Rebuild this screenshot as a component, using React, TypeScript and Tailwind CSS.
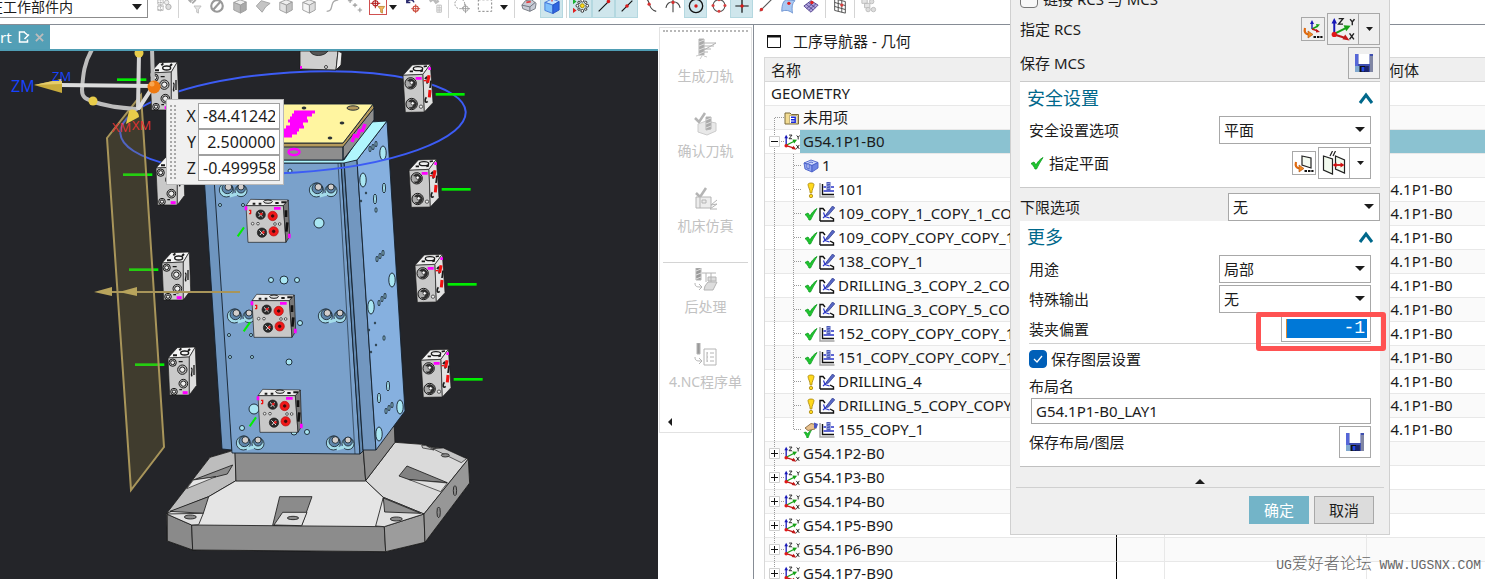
import { useState } from "react";
import type { ReactNode } from "react";
import clsx from "clsx";

type Status = "ok" | "warn" | "hand";
type OpKind = "mill" | "drill";

interface TreeRow {
    label: string;
    level: 0 | 1 | 2;
    icon?: "folder" | "mcs" | "part";
    status?: Status;
    op?: OpKind;
    open?: boolean;
    closed?: boolean;
    selected?: boolean;
    last?: boolean;
    geometry?: string;
}

const PARENT = "G54.1P1-B0";

const rows: TreeRow[] = [
    { label: "GEOMETRY", level: 0 },
    { label: "未用项", level: 1, icon: "folder" },
    { label: PARENT, level: 1, icon: "mcs", open: true, selected: true },
    { label: "1", level: 2, icon: "part" },
    { label: "101", level: 2, status: "warn", op: "mill", geometry: PARENT },
    { label: "109_COPY_1_COPY_1_COPY", level: 2, status: "ok", op: "drill", geometry: PARENT },
    { label: "109_COPY_COPY_COPY_1", level: 2, status: "ok", op: "drill", geometry: PARENT },
    { label: "138_COPY_1", level: 2, status: "ok", op: "drill", geometry: PARENT },
    { label: "DRILLING_3_COPY_2_COPY", level: 2, status: "ok", op: "drill", geometry: PARENT },
    { label: "DRILLING_3_COPY_5_COPY", level: 2, status: "ok", op: "drill", geometry: PARENT },
    { label: "152_COPY_COPY_COPY_1", level: 2, status: "ok", op: "mill", geometry: PARENT },
    { label: "151_COPY_COPY_COPY_1", level: 2, status: "ok", op: "mill", geometry: PARENT },
    { label: "DRILLING_4", level: 2, status: "warn", op: "drill", geometry: PARENT },
    { label: "DRILLING_5_COPY_COPY", level: 2, status: "warn", op: "drill", geometry: PARENT },
    { label: "155_COPY_1", level: 2, status: "hand", op: "mill", geometry: PARENT, last: true },
    { label: "G54.1P2-B0", level: 1, icon: "mcs", closed: true },
    { label: "G54.1P3-B0", level: 1, icon: "mcs", closed: true },
    { label: "G54.1P4-B0", level: 1, icon: "mcs", closed: true },
    { label: "G54.1P5-B90", level: 1, icon: "mcs", closed: true },
    { label: "G54.1P6-B90", level: 1, icon: "mcs", closed: true },
    { label: "G54.1P7-B90", level: 1, icon: "mcs", closed: true },
];

/* ---------- small icons ---------- */

function Triangle({ up = false, className = "h-[6px] w-[10px]" }: { up?: boolean; className?: string }) {
    return (
        <svg viewBox="0 0 10 6" preserveAspectRatio="none" className={clsx("shrink-0", className)} fill="#1c1c1c">
            <path d={up ? "M0 6 5 0l5 6z" : "M0 0h10L5 6z"} />
        </svg>
    );
}

function AxesIcon({ className = "size-4" }: { className?: string }) {
    return (
        <svg viewBox="0 0 22 22" className={clsx("shrink-0", className)}>
            <path d="M3 16V4" stroke="#1717b8" strokeWidth="1.8" />
            <path d="M0.5 6 3 1l2.500 5z" fill="#1717b8" />
            <path d="M3 15.500 14 10" stroke="#16a016" strokeWidth="1.800" />
            <path d="M11.500 7.500 18 8l-4 5z" fill="#16a016" />
            <path d="m3 16 11 3.500" stroke="#c01818" strokeWidth="1.800" />
            <path d="M13 16 17 21.500l-6.500-1z" fill="#c01818" />
            <circle cx="3" cy="16" r="2.400" fill="#e01818" />
            <path d="M7 1.500h4L7 6.500h4M17.500 2l2 2.500 2-2.500M19.500 4.500V7.500M17 15l4 5.500M21 15l-4 5.500" stroke="#222" strokeWidth="1.300" fill="none" />
        </svg>
    );
}

function CheckIcon() {
    return (
        <svg viewBox="0 0 16 16" className="size-4 shrink-0">
            <path d="M2 8.500 5 7l2 3C8.500 7 10.500 4.500 14 2.500 11.500 6.500 9.500 10 7.500 14H6C5 11.500 4 10 2 8.500z" fill="#1fc62f" stroke="#0d9a1e" strokeWidth=".8" />
        </svg>
    );
}

function WarnIcon() {
    return (
        <svg viewBox="0 0 16 16" className="size-4 shrink-0">
            <path d="M5 2.500C5 .5 11 .5 11 2.500 11 5 9 7 8.800 11H7.200C7 7 5 5 5 2.500z" fill="#ffd91c" stroke="#a8850a" strokeWidth=".8" />
            <circle cx="8" cy="14" r="1.700" fill="#ffd91c" stroke="#a8850a" strokeWidth=".8" />
        </svg>
    );
}

function HandIcon() {
    return (
        <svg viewBox="0 0 16 16" className="size-4 shrink-0">
            <path d="M1 10.500 3 10l1.500 2c1-2 2-3 4-4-1.500 3-2.500 5-3.500 8H4c-.5-2-1.500-4-3-5.500z" fill="#1fc62f" stroke="#0d9a1e" strokeWidth=".7" />
            <path d="M2 6 8 1.500l5 1L12 7 5 8.500z" fill="#e8c08c" stroke="#7a5a30" strokeWidth=".8" />
            <path d="m11 .5 4 1.500-1.500 4.500L11 6z" fill="#4a55c0" />
        </svg>
    );
}

function MillIcon() {
    return (
        <svg viewBox="0 0 16 16" className="size-4 shrink-0">
            <path d="M1 1v14H15.500" stroke="#a4a4a4" strokeWidth="1.500" fill="none" />
            <path d="M3.500 2v10.500H15" stroke="#111" strokeWidth="1.400" fill="none" />
            <path d="M4.500 5h2.500M12 5h3M4.500 9h10.500" stroke="#2a35c8" strokeWidth="1.300" />
            <path d="M7.500 0h4v8.500h-4z" fill="#4c5bb8" />
            <path d="m7.500 2 4-1M7.500 4.500l4-1M7.500 7l4-1" stroke="#a9b4ee" strokeWidth=".7" />
        </svg>
    );
}

function DrillIcon() {
    return (
        <svg viewBox="0 0 16 16" className="size-4 shrink-0">
            <path d="M1 15V2.500h3l2 2.500M1 15h13.500v-2L11 11" stroke="#111" strokeWidth="1.400" fill="none" />
            <path d="M4.500 6.500 6 10.500l4.500 1.500M4 12l4.500-4" stroke="#2a35c8" strokeWidth="1.200" fill="none" />
            <path d="M7 8.500 13.500 0l2.300 1.800L9 9.500z" fill="#5868c4" stroke="#28348c" strokeWidth=".7" />
        </svg>
    );
}

function FolderIcon() {
    return (
        <svg viewBox="0 0 16 16" className="size-4 shrink-0">
            <path d="M1 3h5l1.500 1.500H14.500V14H1z" fill="#f3dc93" stroke="#7a6a3a" strokeWidth="1" />
            <path d="M5.500 5.500h7.500v8H5.500z" fill="#fff" stroke="#9a8a50" strokeWidth=".6" />
            <path d="M7 7.200h4.200v5H7M7 9.700h4" stroke="#1a2ad8" strokeWidth="1.400" fill="none" />
        </svg>
    );
}

function PartIcon() {
    return (
        <svg viewBox="0 0 16 16" className="size-4 shrink-0" stroke="#4a60c8" strokeWidth=".9" strokeLinejoin="round">
            <path d="m1 5 7-3 7 2.500-6 3z" fill="#cdd8fc" />
            <path d="m1 5 8 2.500V14L2 11z" fill="#8fa4f0" />
            <path d="m9 7.500 6-3V10l-6 4z" fill="#6f86e2" />
            <path d="m4 6 4-2 2 .8M4 6v4l2 1V7" fill="#dfe6ff" />
        </svg>
    );
}

function FloppyIcon() {
    return (
        <svg viewBox="0 0 20 20" className="size-5">
            <path d="M1 1h18v18H1z" fill="#3f4fb0" />
            <path d="M1 13h5v6H1z" fill="#7fa8d0" />
            <path d="M1 1h3v12H1z" fill="#5566d8" />
            <path d="M16 3h3v16h-3z" fill="#8086a4" />
            <path d="M4.500 1h11v10h-11z" fill="#fff" />
            <path d="M5.500 13h9v6h-9z" fill="#111" />
            <path d="M7.500 14h3v4.500h-3z" fill="#2448e8" />
            <path d="M11 13h3v6h-3z" fill="#1a2470" />
        </svg>
    );
}

function PickIcon({ plane = false }: { plane?: boolean }) {
    return (
        <svg viewBox="0 0 20 20" className="size-5" fill="none">
            {plane ? (
                <path d="m8 3 9 2v10l-9-3z" stroke="#222" strokeWidth="1.200" fill="#f4faf0" />
            ) : (
                <>
                    <path d="M9 10V4" stroke="#1717b8" strokeWidth="1.400" />
                    <path d="m7 5 2-4 2 4z" fill="#1717b8" />
                    <path d="m9 10 6-3" stroke="#16a016" strokeWidth="1.400" />
                    <path d="m13 5 4 .5-3 3z" fill="#16a016" />
                    <path d="m9 10 6 2" stroke="#c01818" strokeWidth="1.400" />
                    <path d="m13 10 4 3-4 .5z" fill="#c01818" />
                </>
            )}
            <path d="M2 9c-1 4 0 6 4 6.500" stroke="#e06a10" strokeWidth="2.200" />
            <path d="m5 12 5 3.500-5 3.500z" fill="#f08a20" stroke="#b04a08" strokeWidth=".6" />
            <path d="M10.500 17h2.500v2h-2.500zM14 17h2.500v2H14zM17.300 17h2.200v2h-2.200z" fill="#111" />
        </svg>
    );
}

function PlanesIcon() {
    return (
        <svg viewBox="0 0 24 24" className="size-6" fill="none">
            <path d="m1.500 5 9 3v15l-9-4zM13.500 5l9 4v13l-9-4z" fill="#f2faee" stroke="#222" strokeWidth="1.200" />
            <path d="m8 5 2.500-5M11 5l2.500-5" stroke="#222" strokeWidth="1.200" />
            <path d="M12 14h9" stroke="#d01010" strokeWidth="1.800" />
            <path d="m14.500 11.500-4 2.500 4 2.500zM18.500 11.500l4 2.500-4 2.500z" fill="#d01010" />
        </svg>
    );
}

/* ---------- top tool bar ---------- */

function Tool({ name, active, boxed, children }: { name: string; active?: boolean; boxed?: boolean; children: ReactNode }) {
    return (
        <button
            type="button"
            aria-label={name}
            className={clsx("flex h-[24px] w-[23px] shrink-0 items-center justify-center", active && "border border-[#b4d8e0] bg-[#cfe6ec]")}
        >
            <svg viewBox="0 0 18 18" className={clsx("size-4 shrink-0", boxed && "outline outline-[#d05050]")} fill="none">
                {children}
            </svg>
        </button>
    );
}

function Separator({ className }: { className: string }) {
    return (
        <span className={clsx("flex h-[26px] shrink-0 justify-center", className)}>
            <span className="w-px bg-[#d4d4d4]" />
        </span>
    );
}

function Cube({ face = "#e2e2e2", side = "#c2c2c2" }: { face?: string; side?: string }) {
    return (
        <g stroke="#9c9c9c" strokeLinejoin="round">
            <path d="m2 5 7-3 7 2.500-6.500 3.500z" fill="#eee" />
            <path d="m2 5 7.500 3V17L2 13.500z" fill={face} />
            <path d="M9.500 8 16 4.500v9L9.500 17z" fill={side} />
        </g>
    );
}

function ToolBar() {
    return (
        <header className="flex h-[25px] shrink-0 items-end overflow-hidden border-b border-[#868c95] bg-white pb-[6px]">
            <div className="relative mr-1 -ml-3 shrink-0">
                <select aria-label="选择范围" className="h-[26px] w-[160px] appearance-none border border-[#8c8c8c] bg-white pt-1 text-[14px] text-[#1c1c1c]">
                    <option>在工作部件内</option>
                </select>
                <Triangle className="pointer-events-none absolute right-[6px] bottom-[8px] h-[6px] w-[10px]" />
            </div>
            <Tool name="装配">
                <path d="M5 1v14M2 5h9M2 9h7M2 13h6" stroke="#b0b0b0" strokeDasharray="2 1" />
                <path d="M2 2h6v5H2zM2 9h6v5H2z" stroke="#b8b8b8" />
                <circle cx="12" cy="5" r="2.500" stroke="#bbb" fill="#eee" />
                <circle cx="14" cy="10" r="3" stroke="#aaa" fill="#ddd" />
            </Tool>
            <Separator className="w-[7px]" />
            <Tool name="重置过滤器">
                <path d="M3 2h5M3 2l3-2M3 2l3 3M7 6l4-4" stroke="#aaa" strokeWidth="2" />
                <path d="M9 9h8l-3 4v4l-2-1v-3z" fill="#e8e8e8" stroke="#bbb" />
            </Tool>
            <Tool name="不选择">
                <circle cx="9" cy="9" r="6.500" stroke="#999" strokeWidth="2.400" />
                <path d="m5 13 8-9" stroke="#999" strokeWidth="2.400" />
            </Tool>
            <Tool name="体"><Cube face="#bdbdbd" side="#a9a9a9" /></Tool>
            <Tool name="面"><path d="M1.500 9 7 3l10 3-5 4-4 6z" fill="#c4c4c4" stroke="#a0a0a0" /></Tool>
            <Tool name="实体面"><Cube /></Tool>
            <Tool name="实体边"><Cube face="#f6f6f6" side="#ddd" /></Tool>
            <Tool name="曲线"><path d="M3 15c5 0 5-3 6-7s2-5 7-6" stroke="#aaa" strokeWidth="1.500" /></Tool>
            <Tool name="点"><path d="M1 3h5M3.500 .5v5M6.500 8h5M9 5.500v5M12 13.500h5M14.500 11v5" stroke="#9a9a9a" strokeWidth="1.200" /></Tool>
            <Tool name="捕捉过滤" boxed>
                <circle cx="6" cy="6" r="3" stroke="#b01818" strokeWidth="1.200" />
                <path d="M6 .5v11M.5 6h11" stroke="#b01818" strokeWidth="1.100" />
                <path d="M9 9.500h7.500l-2.500 3.500V17l-2-1v-3z" fill="#f5b860" stroke="#b07820" strokeWidth=".8" />
            </Tool>
            <span className="flex h-[26px] w-3 shrink-0 items-center"><Triangle className="mt-1 h-[5px] w-2" /></span>
            <Tool name="移动点">
                <path d="M2 5c2-4 7-4 8 0M2 1v4h4" stroke="#28286c" strokeWidth="1.600" />
                <circle cx="12" cy="12" r="3" stroke="#c84030" strokeWidth="1.200" />
                <path d="M12 7v10M7 12h10" stroke="#c84030" />
            </Tool>
            <Tool name="列表">
                <path d="M2 4l4-3 3 4 3-2" stroke="#bbb" strokeWidth="3" />
                <path d="M10 8h5v8h-5zM10 11h5M10 13.500h5M12.500 8v8" stroke="#bbb" />
            </Tool>
            <Separator className="w-[3px]" />
            <Tool name="区域选择">
                <circle cx="6.500" cy="6.500" r="5.500" stroke="#888" strokeDasharray="2 1.500" />
                <circle cx="13" cy="12" r="3" stroke="#999" />
                <path d="M13 7v10M8 12h10" stroke="#999" />
            </Tool>
            <Tool name="矩形选择"><path d="M1.500 2h15v13h-15z" stroke="#777" strokeDasharray="2.500 2" /></Tool>
            <span className="flex h-[26px] w-[15px] shrink-0 items-center justify-center"><Triangle className="mt-1 h-[5px] w-2" /></span>
            <Separator className="w-[6px]" />
            <Tool name="着色">
                <path d="m1 8 4-5 7-1 5 4-1 6-6 3-8-3z" fill="#c8ccd6" stroke="#70747c" />
                <path d="m1 8 9 2 6-5M10 10v5" stroke="#666b76" />
                <path d="m6 5 5-1" stroke="#e04040" strokeWidth="2" />
            </Tool>
            <Tool name="线框着色" active>
                <path d="m1 5 8-4 8 3-7 4z" fill="#c8e6ff" stroke="#4074d8" />
                <path d="m1 5 9 3v9.500L1 14z" fill="#7fc0fb" stroke="#4074d8" />
                <path d="m10 8 7-4v9.500l-7 4z" fill="#2f66e0" stroke="#2450c0" />
                <path d="M9 0v4" stroke="#e04040" strokeWidth="1.500" />
            </Tool>
            <Separator className="w-[6px]" />
            <Tool name="启用捕捉点" active>
                <path d="m0 1 4 3-4 3z" fill="#18b030" />
                <path d="m0 11 4 3-4 3z" fill="#e02020" />
                <g fill="#fff" stroke="#222">
                    <circle cx="10.500" cy="3" r="1.600" /><circle cx="10.500" cy="14.500" r="1.600" />
                    <circle cx="5" cy="8.700" r="1.600" /><circle cx="16" cy="8.700" r="1.600" />
                    <circle cx="6.700" cy="4.900" r="1.300" /><circle cx="14.300" cy="4.900" r="1.300" />
                    <circle cx="6.700" cy="12.600" r="1.300" /><circle cx="14.300" cy="12.600" r="1.300" />
                </g>
                <circle cx="10.500" cy="8.700" r="2.200" fill="#ffe020" stroke="#a88a00" />
            </Tool>
            <Tool name="端点" active><path d="M3 15 14 4" stroke="#111" strokeWidth="1.300" /><circle cx="14" cy="4" r="2" fill="#d81818" /></Tool>
            <Tool name="中点" active><path d="M3 15 15 3" stroke="#111" strokeWidth="1.300" /><circle cx="9" cy="9" r="2" fill="#d81818" /></Tool>
            <Tool name="控制点"><path d="M2 1c9-1 3 12 14 14" stroke="#444" strokeWidth="1.300" /><circle cx="8" cy="7" r="1.800" fill="#d83030" /></Tool>
            <Tool name="交点"><path d="M1 11c2-9 14-9 16 0M9 0v16" stroke="#444" strokeWidth="1.200" /><circle cx="9" cy="5" r="1.800" fill="#d83030" /></Tool>
            <Tool name="圆心" active><circle cx="9" cy="9" r="7.500" stroke="#111" strokeWidth="1.500" /><circle cx="9" cy="9" r="1.900" fill="#d81818" /></Tool>
            <Tool name="象限点">
                <circle cx="9" cy="8.500" r="6.700" stroke="#555" strokeWidth="1.200" />
                <g fill="#d84040"><circle cx="9" cy="2" r="1.700" /><circle cx="9" cy="15" r="1.700" /><circle cx="2.300" cy="8.500" r="1.700" /><circle cx="15.700" cy="8.500" r="1.700" /></g>
            </Tool>
            <Tool name="现有点" active><path d="M9 1.500v15M1.500 9h15" stroke="#111" strokeWidth="1.400" /><circle cx="9" cy="9" r="1.900" fill="#d81818" /></Tool>
            <Tool name="曲线上的点"><path d="M3 15 16 2" stroke="#555" strokeWidth="1.200" /><circle cx="5" cy="13" r="1.900" fill="#d83030" /></Tool>
            <Tool name="面上的点">
                <path d="M2 15C2 7 4 3 7 2l10 1c-3 2-4 7-3 14-3-3-8-4-12-2z" fill="#a9c8f2" stroke="#6a90d0" />
                <circle cx="10" cy="6" r="1.900" fill="#e02020" />
            </Tool>
            <Tool name="有界栅格">
                <path d="m1 9 8-6 8 5-8 8z" fill="#b0a4dc" stroke="#51428c" />
                <path d="m3.500 7 8 6.500M6 5l8 6M4 12l8-7M6.500 14l8-7.500" stroke="#403080" strokeWidth=".8" />
                <circle cx="10" cy="5" r="1.900" fill="#e02020" />
            </Tool>
            <Separator className="w-[6px]" />
            <Tool name="栅格">
                <path d="m3 1 12 3v13L3 14zM3 5l12 3.500M3 9.500 15 13M7 2v13M11 3v13" stroke="#444" />
                <circle cx="11" cy="8" r="1.800" fill="#d84040" />
            </Tool>
            <Separator className="w-[6px]" />
            <Tool name="移动组件">
                <path d="M1 1h6v5H1zM4 6h6v5H4z" fill="#e4e4e4" stroke="#bbb" />
                <circle cx="12" cy="4" r="2.500" fill="#ddd" stroke="#bbb" />
                <circle cx="8" cy="13" r="2.500" fill="#ddd" stroke="#bbb" />
                <circle cx="14" cy="13" r="2.500" fill="#ddd" stroke="#bbb" />
            </Tool>
        </header>
    );
}

/* ---------- 3D scene ---------- */

// The fixtures are drawn in thirds of a unit so the details stay on whole numbers.
function SideBlockRight({ x, y }: { x: number; y: number }) {
    return (
        <g transform={`translate(${x} ${y}) scale(.3333)`} stroke="#1a1a1a" strokeWidth="2">
            <path d="M0 34 28 3 82 1 60 31z" fill="#f0f0f0" />
            <path d="M0 34 60 31 64 144 7 145z" fill="#c9c9c9" />
            <path d="M60 31 82 1 90 116 64 144z" fill="#e2e2e2" />
            <ellipse cx="45" cy="14" rx="14" ry="6" fill="none" strokeWidth="4" />
            <path d="M20 22h10M52 22l8-2M62 8l10-2" strokeWidth="5" />
            <circle cx="23" cy="58" r="17" fill="#aaa" strokeWidth="3" />
            <path d="M14 50a13 13 0 1 1 2 19c12 2 16-10 9-16z" fill="#333" />
            <circle cx="26" cy="56" r="5" fill="#fff" />
            <circle cx="26" cy="120" r="17" fill="#aaa" strokeWidth="3" />
            <path d="M17 112a13 13 0 1 1 2 19c12 2 16-10 9-16z" fill="#333" />
            <circle cx="29" cy="118" r="5" fill="#fff" />
            <circle cx="54" cy="128" r="5" fill="#eee" />
            <path d="M66 45c8-12 8-4 6 14M70 100c-6 8-4 20 4 12M84 50l-3 22" fill="none" strokeWidth="5" />
            <path d="M78 34l-4 22M81 78l-2 22" stroke="#f01010" strokeWidth="9" />
            <path d="M62 50h7" stroke="#f01010" strokeWidth="4" />
            <path d="M38 43h18M76 14h8" stroke="#ff00ff" strokeWidth="8" />
            <path d="M98 91h87" stroke="#00ee00" strokeWidth="8" />
        </g>
    );
}

function SideBlockLeft({ x, y }: { x: number; y: number }) {
    return (
        <g transform={`translate(${x} ${y}) scale(.3333)`} stroke="#1a1a1a" strokeWidth="2">
            <path d="M0 33 28 2 82 0 64 30z" fill="#f4f4f4" />
            <path d="M0 33 64 30 64 144 5 144z" fill="#c9c9c9" />
            <path d="M64 30 82 0 86 115 64 144z" fill="#dedede" />
            <ellipse cx="50" cy="18" rx="12" ry="6" fill="none" strokeWidth="4" />
            <path d="M15 25h12M34 10l6-6M60 12l6-6" strokeWidth="6" />
            <g fill="#bbb" strokeWidth="3">
                <circle cx="14" cy="47" r="11" /><circle cx="43" cy="68" r="14" />
                <circle cx="46" cy="110" r="13" /><circle cx="18" cy="134" r="10" />
            </g>
            <g fill="#eee" strokeWidth="3">
                <circle cx="14" cy="47" r="6" /><circle cx="43" cy="68" r="8" />
                <circle cx="46" cy="110" r="8" /><circle cx="18" cy="134" r="5" />
            </g>
            <path d="M32 44h12M34 128h8M70 62c8 8-4 16 2 26M78 54v30" fill="none" strokeWidth="4" />
            <path d="M44 137h15" stroke="#ff00ff" strokeWidth="9" />
            <path d="M-99 53h88" stroke="#00ee00" strokeWidth="8" />
        </g>
    );
}

function FrontBlock({ x, y }: { x: number; y: number }) {
    return (
        <g transform={`translate(${x} ${y}) scale(.3333)`} stroke="#1a1a1a" strokeWidth="2">
            <path d="M0 20 14 1 127 3 112 20z" fill="#ededed" />
            <path d="M0 20 112 20 120 130 6 130z" fill="#c8c8c8" />
            <path d="M112 20 127 3 131 112 120 130z" fill="#777" />
            <ellipse cx="66" cy="8" rx="13" ry="5" fill="#ddd" strokeWidth="3" />
            <path d="M20 14h8M38 14h8M88 12h10M106 10h14" strokeWidth="6" />
            <path d="M120 34v20M124 70l-3 28" stroke="#111" strokeWidth="8" />
            <circle cx="44" cy="47" r="14" fill="#2b2b2b" /><path d="m36 40 14 14M50 40 38 54" stroke="#ddd" strokeWidth="3" />
            <circle cx="46" cy="45" r="4" fill="#f02020" stroke="none" />
            <circle cx="48" cy="101" r="14" fill="#2b2b2b" /><path d="m40 94 14 14M54 94l-12 14" stroke="#ddd" strokeWidth="3" />
            <circle cx="52" cy="100" r="4" fill="#f02020" stroke="none" />
            <circle cx="80" cy="51" r="14" fill="#f01818" stroke="#b01010" /><circle cx="80" cy="51" r="4" fill="#500" />
            <circle cx="83" cy="97" r="14" fill="#f01818" stroke="#b01010" /><circle cx="83" cy="97" r="4" fill="#500" />
            <g fill="#eee"><circle cx="20" cy="74" r="4" /><circle cx="36" cy="74" r="4" /><circle cx="87" cy="75" r="4" /><circle cx="101" cy="75" r="4" /></g>
            <path d="M9 34h5v10M15 44H9" stroke="#f01010" strokeWidth="4" fill="none" />
            <path d="M84 28h20M0 22v12M130 104v14" stroke="#ff00ff" strokeWidth="8" />
            <path d="m-25 112 19-27" stroke="#00ee00" strokeWidth="6" />
        </g>
    );
}

function SlotPair({ x, y }: { x: number; y: number }) {
    return (
        <g transform={`translate(${x} ${y}) scale(.3333)`} stroke="#18242e" strokeWidth="2.500">
            <circle cx="-20" cy="0" r="21" fill="#a4dcea" />
            <circle cx="24" cy="2" r="18" fill="#a4dcea" />
            <path d="M-10 18 12 12" stroke="#a4dcea" strokeWidth="9" />
            <circle cx="-17" cy="-5" r="16" fill="#5f86ab" />
            <circle cx="24" cy="-4" r="13" fill="#5f86ab" />
            <circle cx="-14" cy="-9" r="10" fill="#d4cfcc" />
            <circle cx="24" cy="-9" r="9" fill="#d4cfcc" />
        </g>
    );
}

const frontHoles = [
    [319, 223, 5], [220, 205, 1.5], [243, 205, 1.5], [271, 280, 2.5], [284, 280, 4], [297, 280, 2.5], [300, 323, 2.5],
    [229, 335, 1.5], [251, 335, 1.5], [230, 357, 1.5], [252, 357, 1.5], [289, 362, 3], [254, 409, 5], [242, 428, 2.5],
    [307, 432, 2.5], [294, 432, 3], [290, 171, 2],
];

const sideHoles = [
    [383, 153, 3.2, 7], [363, 180, 3.2, 7], [392, 280, 3.2, 7], [371, 307, 3.2, 7], [379, 434, 3.2, 7], [400, 407, 3.2, 7],
    [384, 188, 1.5, 5], [375, 199, 1.5, 5], [370, 149, 1, 3], [373, 147, 1, 3], [376, 144, 1, 3], [376, 210, 1, 2.5],
    [377, 259, 1, 3], [380, 256, 1, 3], [383, 253, 1, 3], [379, 303, 1, 3], [382, 299, 1, 3], [385, 296, 1, 3],
    [384, 338, 1, 2.5], [388, 386, 1.5, 5], [379, 398, 1.5, 5], [386, 411, 1, 3], [389, 408, 1, 3], [392, 405, 1, 3],
    [366, 193, .7, 1], [361, 201, .7, 1], [375, 323, .7, 1], [369, 330, .7, 1], [376, 345, .7, 1], [371, 352, .7, 1],
];

function Scene() {
    return (
        <svg viewBox="0 51 658 528" preserveAspectRatio="xMinYMin slice" className="block h-full w-full">
            {/* base plate */}
            <g transform="translate(140 380) scale(.3333)" stroke="#1a1a1a" strokeWidth="2.500" strokeLinejoin="round">
                <path d="M210 232 272 212 765 187 905 205 985 237 989 309 855 487 737 515 158 510 82 483 80 403z" fill="#d9d9d9" />
                <path d="M210 232 285 210 288 302 206 350 80 400z" fill="#bdbdbd" />
                <path d="M288 302H677L730 352 708 440 155 437 206 350z" fill="#e5e5e5" stroke="none" />
                <path d="M288 302H677L730 352M206 350l82-48" fill="none" />
                <path d="M677 302 765 187 845 193 985 237 852 402 730 352z" fill="#dadada" />
                <path d="M285 215H670L677 303H288z" fill="#8d8d8d" />
                <path d="M670 210 763 138 765 187 677 302z" fill="#8d8d8d" />
                <path d="M82 403 155 435 158 510 82 483z" fill="#8a8a8a" />
                <path d="M155 435 733 440 737 515 158 510z" fill="#8c8c8c" />
                <path d="M733 440 852 402 855 487 737 515z" fill="#9c9c9c" />
                <path d="M852 402 985 237 989 309 855 487z" fill="#979797" />
                <path d="M160 300 278 255 262 282 230 290z" fill="#8b8b8b" />
                <path d="M160 300 228 290 140 326z" fill="#e6e6e6" strokeWidth="2" />
                <path d="m90 394 116-44-16 50z" fill="#8f8f8f" />
                <path d="M80 402 190 400 176 434 155 435z" fill="#e2e2e2" />
                <path d="M419 350H516L485 437 398 436z" fill="#8b8b8b" />
                <path d="m428 397h73l-16 40-83-2z" fill="#e0e0e0" />
                <path d="M730 352 852 402 733 440 707 438z" fill="#e0e0e0" />
                <path d="m730 354 112 46-108-4z" fill="#8f8f8f" />
                <path d="M801 258 922 308 808 299 777 288z" fill="#828282" />
                <path d="m808 299 114 10-20 26z" fill="#e0e0e0" strokeWidth="2" />
                <path d="m845 196 12 0 25 14-34-6zM878 206l32-2 70 32-16 12z" fill="#c4c4c4" strokeWidth="2" />
                <g fill="#8c8c8c">
                    <ellipse cx="151" cy="411" rx="18" ry="6" /><ellipse cx="459" cy="414" rx="17" ry="5" /><ellipse cx="769" cy="417" rx="18" ry="6" />
                    <ellipse cx="916" cy="226" rx="12" ry="5" /><ellipse cx="945" cy="332" rx="5" ry="15" /><ellipse cx="896" cy="397" rx="5" ry="16" />
                </g>
            </g>

            {/* column */}
            <g stroke="#14202c" strokeWidth=".9">
                <path d="M203 160 216 160 232 450 222 449z" fill="#6e95bf" />
                <path d="M213 163H341L360 454 232 453z" fill="#7aa1cb" />
                <path d="M341 162H344L363 451 360 454z" fill="#6389b0" />
                <path d="M344 160H357L376 450H363z" fill="#7297c0" />
                <path d="M357 160 387 121 405 411 376 450z" fill="#86b0df" />
                <path d="M200 160H344L370 122 387 121 357 160 344 163H200z" fill="#b0f6fd" />
                <path d="M230 146H343V160H228zM343 146 374 108V120L343 160z" fill="#8e8e8e" />
                <path d="M230 143H343L373 104 374 108 343 147H230z" fill="#b59a5c" />
                <path d="M250 104H373L343 143H230z" fill="#fff5a0" />
                <ellipse cx="353" cy="108" rx="6" ry="2.200" fill="#b59a5c" />
                <ellipse cx="342" cy="123" rx="2" ry="1" fill="#333" /><ellipse cx="330" cy="138" rx="2" ry="1" fill="#333" /><ellipse cx="304" cy="108" rx="2" ry="1" fill="#333" />
                <path d="M338 163 355 454" fill="none" strokeWidth=".6" />
                {frontHoles.map(([x, y, r]) => <circle key={`${x}-${y}`} cx={x} cy={y} r={r} fill="#a9e6f2" />)}
                {sideHoles.map(([x, y, rx, ry]) => <ellipse key={`${x}-${y}`} cx={x} cy={y} rx={rx} ry={ry} fill="#a9e6f2" />)}
            </g>
            <g stroke="#ff00ff" fill="none">
                <path d="M294 112h21M292 115h20M290 118h17M288 121h20M290 124h13M286 127h18M284 130h15M284 133h13M283 136h9" strokeWidth="3" />
                <path d="m352 142 3-8M357 138l3-9M362 132l3-8" strokeWidth="3.500" />
                <ellipse cx="294" cy="152" rx="5.500" ry="3" strokeWidth="2.500" />
            </g>
            {[[233, 190], [323, 190], [241, 316], [332, 316], [250, 443], [340, 443]].map(([x, y]) => (
                <SlotPair key={`${x}-${y}`} x={x} y={y} />
            ))}

            <ellipse cx="293" cy="122.500" rx="173" ry="50" transform="rotate(-3.600 293 122.500)" fill="none" stroke="#3c5cf5" strokeWidth="2" />

            {/* fixtures */}
            <g stroke="#1a1a1a" strokeWidth=".8">
                <path d="M300 51H338L336 70 300 69z" fill="#cfcfcf" />
                <path d="m338 51 4 2-1 12-5 5z" fill="#eee" />
                <path d="M310 51c2 6 14 6 18 0z" fill="#555" />
                <circle cx="326" cy="67" r="1.500" fill="#eee" />
                <path d="M301 66v3" stroke="#ff00ff" strokeWidth="2" />
            </g>
            {[0, 1, 2, 3].map(i => <SideBlockRight key={i} x={403 + i * 6} y={64 + i * 95} />)}
            {[0, 1, 2, 3].map(i => <SideBlockLeft key={i} x={150 + i * 6} y={62 + i * 95} />)}
            {[0, 1, 2].map(i => <FrontBlock key={i} x={246 + i * 6} y={199 + i * 95} />)}

            {/* clearance plane */}
            <path d="M107 138 141 95 164 447 131 490z" fill="#8a7a3c" fillOpacity=".28" stroke="#a8955a" strokeWidth="2" />
            <path d="M110 292H240" stroke="#a8955a" strokeWidth="2" />
            <path d="m94 292 18-5v9zM119 292l18-5v9z" fill="#b8a45c" />

            {/* triad handle */}
            <g fill="none" stroke="#bdbdbd" strokeWidth="4" strokeLinecap="round">
                <path d="M93 48C84 62 83 75 82 90c0 8 4 9 12 12 12 4 26 6 42 7" />
                <path d="M139 54 138 108" stroke="#d4d4d4" />
                <path d="M152 48 153 84" />
                <path d="M60 85 152 86" stroke="#dcdcdc" />
                <path d="m152 88-13 20" stroke="#dcdcdc" />
            </g>
            <path d="m34 85 28-6v14z" fill="#c8ab3c" />
            <path d="M34 85 62 79v5z" fill="#e4cc6c" />
            <path d="m126 124 3-13c3-4 10 0 10 6z" fill="#e8cc4a" />
            <circle cx="93" cy="101" r="4.500" fill="#e8cc4a" />
            <circle cx="139" cy="53" r="4.500" fill="#e8cc4a" />
            <circle cx="154" cy="87" r="6.500" fill="#ee7a12" />
            <circle cx="152" cy="84" r="2.500" fill="#f9a650" />
            <g fontFamily="Open Sans, sans-serif">
                <text x="11" y="92" fontSize="16" fill="#1743ff">ZM</text>
                <text x="52" y="81" fontSize="13" fill="#1743ff">ZM</text>
                <text x="112" y="132" fontSize="13" fill="#e03232">XM</text>
                <text x="132" y="130" fontSize="13" fill="#e03232">XM</text>
            </g>
        </svg>
    );
}

function CoordinateBox() {
    const [coords, setCoords] = useState({ X: "-84.41242", Y: " 2.50000000", Z: "-0.499958" });
    return (
        <div className="absolute top-[48px] left-[166px] flex w-[118px] border border-[#b8b8b8] bg-[#f0f0f0] py-[3px] pr-[3px]">
            <span className="my-px ml-[2px] w-[8px] bg-[radial-gradient(#a8a8a8_1px,transparent_1px)] bg-[size:4px_4px]" />
            <div className="flex min-w-0 flex-1 flex-col">
                {(["X", "Y", "Z"] as const).map(axis => (
                    <label key={axis} className="flex h-[26px] items-center text-[16px] text-[#1c1c1c]">
                        <span className="w-[21px] pr-[2px] text-right">{axis}</span>
                        <input
                            value={coords[axis]}
                            onChange={e => setCoords({ ...coords, [axis]: e.target.value })}
                            className="h-[26px] w-0 min-w-0 flex-1 border border-[#a0a0a0] bg-white px-1"
                        />
                    </label>
                ))}
            </div>
        </div>
    );
}

function Viewport() {
    return (
        <section className="flex min-w-0 flex-[658] flex-col">
            <div className="flex h-[26px] shrink-0 border-b-2 border-[#4f9db4] bg-white">
                <div className="flex w-[50px] items-center gap-[5px] bg-[#539fb6] text-[15px] text-white">
                    <span className="w-[13px]">rt</span>
                    <svg viewBox="0 0 12 12" className="size-3" fill="none" stroke="#fff" strokeWidth="1.500">
                        <path d="M7 1H1.500v10h8V8.500M6 1l3.500 3M11 3.500 6.500 8" />
                    </svg>
                    <button type="button" aria-label="关闭">
                        <svg viewBox="0 0 10 10" className="size-[9px]" stroke="#bcbcbc" strokeWidth="2"><path d="m1 1 8 8M9 1 1 9" /></svg>
                    </button>
                </div>
            </div>
            <div className="relative min-h-0 flex-1 overflow-hidden bg-[#242529]">
                <Scene />
                <CoordinateBox />
            </div>
        </section>
    );
}

/* ---------- operation buttons ---------- */

function SideButton({ label, children }: { label: string; children: ReactNode }) {
    return (
        <button type="button" className="flex h-[75px] w-full shrink-0 flex-col items-center text-[14px] leading-5 text-[#c2c2c2]">
            <svg viewBox="0 0 24 24" className="mb-[5px] size-6" fill="none" stroke="#b4b4b4">{children}</svg>
            {label}
        </button>
    );
}

function SidePanel() {
    return (
        <aside className="w-24 shrink-0 border-r border-[#868c95] bg-white pt-[2px]">
            <div className="ml-px flex h-[406px] w-[93px] flex-col border border-[#e2e2e2]">
                <div className="mx-[3px] mt-[2px] mb-[5px] border-t-2 border-dotted border-[#b8b8b8]" />
                <SideButton label="生成刀轨">
                    <path d="M5 2h5v16H5z" fill="#aaa" />
                    <path d="m5 5 5-2M5 9l5-2M5 13l5-2M5 17l5-2" stroke="#ddd" />
                    <path d="M10 6h12M10 9h10M10 12h7M10 15h4M22 6 10 13" />
                    <path d="m2 19 4-1M6 22l2-3M13 20l-3-1" stroke="#ccc" />
                </SideButton>
                <SideButton label="确认刀轨">
                    <path d="m1 6 4 4 6-9" strokeWidth="2.500" />
                    <path d="m4 12 8-3 10 2v8l-9 4-9-3z" fill="#e8e8e8" stroke="#ccc" />
                    <path d="M12 5h5v12l-5 1z" fill="#aaa" />
                    <path d="m12 8 5-2M12 12l5-2M12 16l5-2" stroke="#ddd" />
                </SideButton>
                <SideButton label="机床仿真">
                    <path d="m2 6 4 4 6-9" strokeWidth="2.500" />
                    <path d="M2 10h15v11H2zM6 10v11M8 13h4v3H8z" fill="#ececec" />
                    <path d="m23 13-6 5 6-1-7 5h7" />
                </SideButton>
                <hr className="mx-[3px] mb-[5px] border-[#d4d4d4]" />
                <SideButton label="后处理">
                    <path d="M2 0h5v12H2z" fill="#999" />
                    <path d="m2 3 5-2M2 7l5-2M2 11l5-2" stroke="#ddd" />
                    <path d="M8 5h14M12 5v9M17 5v9M14 9h8v4h-8zM11 18l3-4h9l-4 8h-9z" fill="#ddd" />
                    <path d="M1 15c0 4 2 4 7 4M5 16l3 3-3 3" />
                </SideButton>
                <SideButton label="4.NC程序单">
                    <path d="M3 0h3v11H3z" fill="#999" />
                    <path d="M10 6h12v16H10zM13 10h1M16 10h4M13 14h1M16 14h4M13 18h1M16 18h4M13 9v10" />
                    <path d="M1 14c0 4 2 4 7 4M5 15l3 3-3 3" />
                </SideButton>
                <svg viewBox="0 0 4 8" className="ml-2 h-2 w-1 shrink-0"><path d="M4 0v8L0 4z" fill="#1c1c1c" /></svg>
            </div>
        </aside>
    );
}

/* ---------- operation navigator ---------- */

function Guide({ lines, box }: { lines: string; box?: "plus" | "minus" }) {
    return (
        <svg viewBox="0 0 19 24" className="h-6 w-[19px] shrink-0" fill="none">
            <path d={lines} stroke="#9a9a9a" strokeDasharray="1 1" shapeRendering="crispEdges" />
            {box && (
                <>
                    <path d="M4.500 6.500h10v10h-10z" fill="#fff" stroke="#d0d0d0" />
                    <path d={box === "plus" ? "M6 11.500h7M9.500 8v7" : "M6 11.500h7"} stroke="#111" />
                </>
            )}
        </svg>
    );
}

function NameCell({ row }: { row: TreeRow }) {
    const box = row.open ? "minus" : row.closed ? "plus" : undefined;
    return (
        <div className="flex h-[23px] items-center overflow-hidden">
            {row.level === 1 && <Guide lines={row.icon === "folder" ? "M9.500 12V24M9.500 11.500H19" : "M9.500 0V24M9.500 11.500H19"} box={box} />}
            {row.level === 2 && (
                <>
                    <Guide lines="M9.500 0V24" />
                    <Guide lines={row.last ? "M9.500 0V12M9.500 11.500H18" : "M9.500 0V24M9.500 11.500H18"} />
                </>
            )}
            {row.icon === "folder" && <FolderIcon />}
            {row.icon === "mcs" && <AxesIcon />}
            {row.icon === "part" && <PartIcon />}
            {row.status === "ok" && <CheckIcon />}
            {row.status === "warn" && <WarnIcon />}
            {row.status === "hand" && <HandIcon />}
            {row.op === "mill" && <MillIcon />}
            {row.op === "drill" && <DrillIcon />}
            <span className={clsx("h-full flex-1 pl-[3px] leading-[23px] whitespace-nowrap", row.selected && "bg-[#8bc2d1]")}>{row.label}</span>
        </div>
    );
}

function Navigator() {
    return (
        <section className="flex min-w-0 flex-[721] flex-col overflow-hidden bg-white pl-[10px]">
            <h2 className="flex h-8 shrink-0 items-center gap-3 pl-[3px]">
                <svg viewBox="0 0 14 13" className="h-[13px] w-[14px]"><path d="M.5 1.500h13v11H.5z" fill="none" stroke="#111" /><path d="M0 0h14v2.500H0z" fill="#111" /></svg>
                工序导航器 - 几何
            </h2>
            <div className="min-h-0 flex-1 overflow-hidden border-t border-l border-[#d8d8d8]">
                <table className="w-full table-fixed border-separate border-spacing-0">
                    <colgroup>
                        <col className="w-[351px]" />
                        <col className="w-[48px]" />
                        <col className="w-[202px]" />
                        <col />
                    </colgroup>
                    <thead>
                        <tr className="h-6 bg-[#efefef] text-left">
                            <th className="border-b border-[#d8d8d8] p-0 pl-[6px] font-normal">名称</th>
                            <th className="border-b border-[#d8d8d8] p-0" />
                            <th className="border-b border-[#d8d8d8] p-0" />
                            <th className="border-b border-[#d8d8d8] p-0 pl-2 font-normal">几何体</th>
                        </tr>
                    </thead>
                    <tbody>
                        {rows.map((row, i) => {
                            const cell = clsx("h-6 border-b border-[#e8e8e8] p-0", row.selected && "bg-[#8bc2d1]");
                            return (
                                <tr key={i} className={i % 2 ? "bg-[#fafafa]" : "bg-white"}>
                                    <td className={clsx("h-6 border-b border-[#e8e8e8] p-0", row.level === 0 && "pl-[3px]")}><NameCell row={row} /></td>
                                    <td className={clsx(cell, "border-l border-l-black")} />
                                    <td className={clsx(cell, "border-l")} />
                                    <td className={clsx(cell, !row.selected && i > 15 && "border-l")}>
                                        <span className="block pl-[5px] leading-[23px]">{row.geometry}</span>
                                    </td>
                                </tr>
                            );
                        })}
                    </tbody>
                </table>
            </div>
        </section>
    );
}

/* ---------- MCS dialog ---------- */

function Dropdown({ id, value }: { id: string; value: string }) {
    return (
        <div className="relative shrink-0">
            <select id={id} className="h-7 w-[152px] appearance-none border border-[#a8a8a8] bg-white pl-1">
                <option>{value}</option>
            </select>
            <Triangle className="pointer-events-none absolute top-[11px] right-[6px] h-[5px] w-[10px]" />
        </div>
    );
}

function IconButton({ label, className, children }: { label: string; className: string; children: ReactNode }) {
    return (
        <button type="button" aria-label={label} className={clsx("flex shrink-0 items-center justify-center border border-[#a8a8a8]", className)}>
            {children}
        </button>
    );
}

function SplitButton({ label, children }: { label: string; children: ReactNode }) {
    return (
        <div className="ml-[2px] flex">
            <IconButton label={label} className="size-8">{children}</IconButton>
            <IconButton label={`${label}选项`} className="-ml-px h-8 w-[22px]"><Triangle className="h-1 w-[7px]" /></IconButton>
        </div>
    );
}

function GroupTitle({ children }: { children: ReactNode }) {
    return (
        <button type="button" className="flex h-[31px] w-full items-center justify-between pr-[6px] pl-[7px] text-[18px] text-[#00688b]">
            {children}
            <svg viewBox="0 0 16 12" className="h-3 w-4" fill="none" stroke="#00688b" strokeWidth="3"><path d="M2 11 8 3l6 8" /></svg>
        </button>
    );
}

function McsDialog() {
    const [saveLayers, setSaveLayers] = useState(true);
    const [offset, setOffset] = useState("-1");
    const [layout, setLayout] = useState("G54.1P1-B0_LAY1");

    return (
        <form role="dialog" aria-label="MCS" className="absolute -top-[11px] right-[95px] w-[380px] border border-[#d0d0d0] bg-[#efefef]" onSubmit={e => e.preventDefault()}>
            <div className="px-[9px]">
                <label className="flex h-[22px] items-center gap-[5px] pb-1">
                    <input type="checkbox" className="size-[18px] appearance-none rounded-[4px] border border-[#777] bg-[#f8f8f8]" />
                    链接 RCS 与 MCS
                </label>
                <div className="flex h-[34px] items-center">
                    <span className="flex-1">指定 RCS</span>
                    <IconButton label="坐标系对话框" className="size-6"><PickIcon /></IconButton>
                    <SplitButton label="坐标系"><AxesIcon className="size-6" /></SplitButton>
                </div>
                <div className="flex h-[34px] items-center justify-between">
                    保存 MCS
                    <IconButton label="保存 MCS" className="size-8"><FloppyIcon /></IconButton>
                </div>

                <fieldset className="mt-px border-y border-[#cacaca] bg-white pb-2">
                    <GroupTitle>安全设置</GroupTitle>
                    <div className="mx-[9px]">
                        <div className="flex h-[34px] items-center justify-between">
                            <label htmlFor="clearance">安全设置选项</label>
                            <Dropdown id="clearance" value="平面" />
                        </div>
                        <div className="flex h-8 items-center">
                            <CheckIcon />
                            <span className="flex-1 pl-1">指定平面</span>
                            <IconButton label="平面对话框" className="size-6"><PickIcon plane /></IconButton>
                            <SplitButton label="平面"><PlanesIcon /></SplitButton>
                        </div>
                    </div>
                </fieldset>

                <div className="mt-1 flex h-[29px] items-center justify-between">
                    <label htmlFor="lower-limit">下限选项</label>
                    <Dropdown id="lower-limit" value="无" />
                </div>

                <fieldset className="border-b border-[#c0c0c0] bg-white pb-[6px]">
                    <GroupTitle>更多</GroupTitle>
                    <div className="mx-[9px]">
                        <div className="mt-[2px] flex h-[30px] items-center justify-between">
                            <label htmlFor="purpose">用途</label>
                            <Dropdown id="purpose" value="局部" />
                        </div>
                        <div className="flex h-[30px] items-center justify-between">
                            <label htmlFor="special">特殊输出</label>
                            <Dropdown id="special" value="无" />
                        </div>
                        <div className="relative flex h-[30px] items-center justify-between border-b border-[#d0d0d0]">
                            <label htmlFor="offset">装夹偏置</label>
                            <div className="flex h-[26px] w-[90px] items-center border border-[#a8a8a8] pr-[3px] pl-1">
                                <input
                                    id="offset"
                                    value={offset}
                                    onChange={e => setOffset(e.target.value)}
                                    className="h-[19px] w-full min-w-0 border-l border-[#e08a30] bg-[#0078d7] pr-[2px] text-right font-['Liberation_Mono',monospace] text-[18px] leading-[19px] text-white"
                                />
                            </div>
                            <span className="pointer-events-none absolute -top-[2px] -right-[15px] h-[39px] w-[130px] rounded-[3px] border-[5px] border-[#ff5252]" />
                        </div>
                        <label className="flex h-[30px] items-center gap-1">
                            <span className="relative flex">
                                <input
                                    type="checkbox"
                                    checked={saveLayers}
                                    onChange={e => setSaveLayers(e.target.checked)}
                                    className="size-[18px] appearance-none rounded-[4px] border border-[#005fb8] checked:bg-[#005fb8]"
                                />
                                {saveLayers && (
                                    <svg viewBox="0 0 18 18" className="pointer-events-none absolute inset-0 size-[18px]" fill="none" stroke="#fff" strokeWidth="1.300"><path d="m5 9 3 3 5-6" /></svg>
                                )}
                            </span>
                            保存图层设置
                        </label>
                        <label htmlFor="layout" className="flex h-6 items-center">布局名</label>
                        <input
                            id="layout"
                            value={layout}
                            onChange={e => setLayout(e.target.value)}
                            className="ml-[2px] block h-[26px] w-[340px] border border-[#a8a8a8] bg-white px-1"
                        />
                        <div className="flex h-9 items-center justify-between">
                            保存布局/图层
                            <IconButton label="保存布局/图层" className="size-8"><FloppyIcon /></IconButton>
                        </div>
                    </div>
                </fieldset>
            </div>
            <button type="button" aria-label="收起" className="mx-auto flex h-5 w-6 items-end justify-center pb-[3px]"><Triangle up className="h-[5px] w-[10px]" /></button>
            <div className="mx-[5px] flex justify-end gap-[5px] border-t border-[#d0d0d0] pt-2 pr-[10px] pb-[10px]">
                <button type="submit" className="h-7 w-[60px] bg-[#73b4c8] text-white">确定</button>
                <button type="button" className="h-7 w-[60px] border border-[#a8a8a8] bg-[#dcdcdc]">取消</button>
            </div>
        </form>
    );
}

export default function App() {
    return (
        <div className="relative flex h-screen flex-col overflow-hidden bg-white font-['Noto_Sans','Noto_Sans_CJK_SC',sans-serif] text-[15px] leading-5 text-[#1c1c1c]">
            <ToolBar />
            <main className="flex min-h-0 flex-1">
                <Viewport />
                <SidePanel />
                <Navigator />
            </main>
            <McsDialog />
            <p className="absolute right-[4px] bottom-[3px] font-['Liberation_Mono','Noto_Sans_CJK_SC',monospace] text-[13px] whitespace-pre text-[#666]">
                UG<span className="text-[16px] font-light">爱好者论坛</span> WWW.UGSNX.COM
            </p>
        </div>
    );
}
